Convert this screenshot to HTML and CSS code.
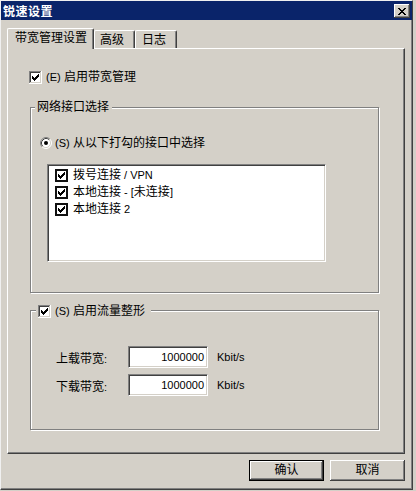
FILE: index.html
```html
<!DOCTYPE html>
<html lang="zh-CN">
<head>
<meta charset="utf-8">
<title>锐速设置</title>
<link rel="stylesheet" href="styles.css">
</head>
<body>
<svg class="defs" width="0" height="0" aria-hidden="true">
  <symbol id="cb3d" viewBox="0 0 13 13">
    <rect x="0" y="0" width="13" height="13" fill="#fff"/>
    <path d="M0 0h12v1H1v11H0z" fill="#808080"/>
    <path d="M12 0h1v13H0v-1h12z" fill="#fff"/>
    <path d="M1 1h10v1H2v9H1z" fill="#404040"/>
    <path d="M11 1h1v11H1v-1h10z" fill="#d4d0c8"/>
    <path d="M3 5h1v3H3zM4 6h1v3H4zM5 7h1v3H5zM6 6h1v3H6zM7 5h1v3H7zM8 4h1v3H8zM9 3h1v3H9z" fill="#000"/>
  </symbol>
  <symbol id="cbflat" viewBox="0 0 13 13">
    <rect x="0" y="0" width="13" height="13" fill="#111"/>
    <rect x="2" y="2" width="9" height="9" fill="#fff"/>
    <path d="M3 5h1v3H3zM4 6h1v3H4zM5 7h1v3H5zM6 6h1v3H6zM7 5h1v3H7zM8 4h1v3H8zM9 3h1v3H9z" fill="#000"/>
  </symbol>
  <symbol id="radio" viewBox="0 0 12 12">
    <circle cx="6" cy="6" r="5" fill="#fff"/>
    <path d="M2.11 9.89A5.5 5.5 0 0 1 9.89 2.11" fill="none" stroke="#808080" stroke-width="1"/>
    <path d="M9.89 2.11A5.5 5.5 0 0 1 2.11 9.89" fill="none" stroke="#fff" stroke-width="1"/>
    <path d="M2.82 9.18A4.5 4.5 0 0 1 9.18 2.82" fill="none" stroke="#404040" stroke-width="1"/>
    <path d="M9.18 2.82A4.5 4.5 0 0 1 2.82 9.18" fill="none" stroke="#d4d0c8" stroke-width="1"/>
    <circle cx="6" cy="6" r="2" fill="#000"/>
  </symbol>
</svg>

<div class="window">
  <div class="titlebar">
    <span class="title">锐速设置</span>
    <span class="close">
      <svg width="8" height="7" viewBox="0 0 8 7" shape-rendering="crispEdges"><path d="M0 0h2v1H0zM6 0h2v1H6zM1 1h2v1H1zM5 1h2v1H5zM2 2h4v1H2zM3 3h2v1H3zM2 4h4v1H2zM1 5h2v1H1zM5 5h2v1H5zM0 6h2v1H0zM6 6h2v1H6z" fill="#000"/></svg>
    </span>
  </div>

  <div class="tabs">
    <div class="tab active">带宽管理设置</div>
    <div class="tab t2">高级</div>
    <div class="tab t3">日志</div>
  </div>

  <div class="panel">
    <div class="check-row">
      <svg class="cb" viewBox="0 0 13 13"><use href="#cb3d"/></svg>
      <span><span class="l">(E)</span> 启用带宽管理</span>
    </div>

    <div class="group g1">
      <div class="legend">网络接口选择</div>
      <div class="radio-row">
        <svg class="rb" viewBox="0 0 12 12"><use href="#radio"/></svg>
        <span><span class="l">(S)</span> 从以下打勾的接口中选择</span>
      </div>
      <div class="listbox">
        <div class="item"><svg class="cb" viewBox="0 0 13 13"><use href="#cbflat"/></svg><span>拨号连接<span class="l"> / VPN</span></span></div>
        <div class="item"><svg class="cb" viewBox="0 0 13 13"><use href="#cbflat"/></svg><span>本地连接<span class="l"> - [</span>未连接<span class="l">]</span></span></div>
        <div class="item"><svg class="cb" viewBox="0 0 13 13"><use href="#cbflat"/></svg><span>本地连接<span class="l"> 2</span></span></div>
      </div>
    </div>

    <div class="group g2">
      <div class="legend legend-check">
        <svg class="cb" viewBox="0 0 13 13"><use href="#cb3d"/></svg>
        <span><span class="l">(S)</span> 启用流量整形</span>
      </div>
      <div class="field-row">
        <span class="label">上载带宽<span class="l">:</span></span>
        <span class="input l">1000000</span>
        <span class="unit l">Kbit/s</span>
      </div>
      <div class="field-row">
        <span class="label">下载带宽<span class="l">:</span></span>
        <span class="input l">1000000</span>
        <span class="unit l">Kbit/s</span>
      </div>
    </div>
  </div>

  <div class="buttons">
    <div class="btn default">确认</div>
    <div class="btn">取消</div>
  </div>
</div>
</body>
</html>
```

FILE: styles.css
```css
* {
  box-sizing: border-box;
}

html,
body {
  margin: 0;
  padding: 0;
}

body {
  width: 416px;
  height: 491px;
  overflow: hidden;
  background: #d4d0c8;
  color: #000;
  font-family: "Liberation Sans", "Noto Sans CJK SC", sans-serif;
  font-size: 12px;
}

.defs {
  position: absolute;
  width: 0;
  height: 0;
  overflow: hidden;
}

.l {
  font-size: 11px;
}

.window {
  width: 413px;
  height: 490px;
  background: #d4d0c8;
  border: 1px solid;
  border-color: #f0f0f0 #404040 #404040 #f0f0f0;
  box-shadow: inset -1px -1px 0 #808080;
}

/* title bar */
.titlebar {
  height: 19px;
  background: #0a246a;
  display: flex;
  align-items: center;
  padding-left: 2px;
}

.title {
  color: #fff;
  font-family: "Noto Sans CJK SC", sans-serif;
  font-weight: bold;
  font-size: 12px;
  letter-spacing: 0.5px;
  line-height: 19px;
}

.close {
  margin-left: auto;
  margin-right: 2px;
  width: 16px;
  height: 14px;
  background: #d4d0c8;
  box-shadow: inset -1px -1px 0 #404040, inset 1px 1px 0 #fff, inset -2px -2px 0 #808080;
  display: flex;
  align-items: center;
  justify-content: center;
  padding-top: 1px;
}

.close svg {
  display: block;
}

/* tabs */
.tabs {
  display: flex;
  align-items: flex-end;
  height: 20px;
  margin-top: 8px;
  padding-left: 6px;
  position: relative;
  z-index: 1;
}

.tab {
  height: 18px;
  background: #d4d0c8;
  border-top: 1px solid #fff;
  border-left: 1px solid #fff;
  border-right: 1px solid #404040;
  border-radius: 2px 2px 0 0;
  box-shadow: inset -1px 0 0 #808080;
  line-height: 19px;
  padding-left: 5px;
  white-space: nowrap;
}

.tab.active {
  width: 87px;
  height: 21px;
  margin-bottom: -1px;
  padding-left: 7px;
}

.tab.t2 {
  width: 41px;
}

.tab.t3 {
  width: 42px;
  padding-left: 6px;
}

/* panel */
.panel {
  width: 398px;
  height: 406px;
  margin-left: 6px;
  border: 1px solid;
  border-color: #fff #404040 #404040 #fff;
  box-shadow: inset -1px -1px 0 #808080;
  padding: 22px 0 0 21px;
}

.cb {
  display: block;
  width: 13px;
  height: 13px;
  flex-shrink: 0;
}

.rb {
  display: block;
  width: 12px;
  height: 12px;
  flex-shrink: 0;
}

.check-row {
  display: flex;
  align-items: center;
  gap: 4px;
  height: 13px;
  line-height: 13px;
  white-space: nowrap;
}

/* group boxes */
.group {
  position: relative;
  width: 349px;
  margin-left: 1px;
  border: 1px solid #808080;
  box-shadow: 1px 1px 0 #fff, inset 1px 1px 0 #fff;
}

.g1 {
  height: 186px;
  margin-top: 23px;
  padding: 29px 0 0 9px;
}

.g2 {
  height: 120px;
  margin-top: 17px;
  padding: 35px 0 0 25px;
}

.legend {
  position: absolute;
  top: -7px;
  left: 4px;
  height: 13px;
  line-height: 13px;
  padding: 0 3px 0 2px;
  background: #d4d0c8;
  white-space: nowrap;
}

.legend-check {
  display: flex;
  align-items: center;
  gap: 4px;
  top: -6px;
  left: 5px;
  padding: 0 6px 0 2px;
}

.radio-row {
  display: flex;
  align-items: center;
  gap: 3px;
  height: 12px;
  line-height: 12px;
  white-space: nowrap;
}

.listbox {
  width: 279px;
  height: 98px;
  margin-top: 15px;
  margin-left: 7px;
  background: #fff;
  border: 1px solid;
  border-color: #808080 #fff #fff #808080;
  box-shadow: inset 1px 1px 0 #404040, inset -1px -1px 0 #d4d0c8;
  padding: 2px 0 0 7px;
}

.item {
  display: flex;
  align-items: center;
  gap: 5px;
  height: 17px;
  line-height: 17px;
  white-space: nowrap;
}

/* fields */
.field-row {
  display: flex;
  align-items: center;
  height: 22px;
  white-space: nowrap;
}

.field-row + .field-row {
  margin-top: 6px;
}

.label {
  width: 72px;
  flex-shrink: 0;
}

.input {
  width: 80px;
  height: 22px;
  flex-shrink: 0;
  background: #fff;
  border: 1px solid;
  border-color: #808080 #fff #fff #808080;
  box-shadow: inset 1px 1px 0 #404040, inset -1px -1px 0 #d4d0c8;
  text-align: right;
  padding-right: 3px;
  line-height: 20px;
}

.unit {
  margin-left: 9px;
}

/* buttons */
.buttons {
  display: flex;
  justify-content: flex-end;
  gap: 6px;
  margin-top: 6px;
  padding-right: 7px;
}

.btn {
  width: 75px;
  height: 21px;
  display: flex;
  align-items: center;
  justify-content: center;
  background: #d4d0c8;
  box-shadow: inset -1px -1px 0 #404040, inset 1px 1px 0 #fff, inset -2px -2px 0 #808080;
  line-height: 19px;
}

.btn.default {
  border: 1px solid #000;
  box-shadow: inset -1px -1px 0 #404040, inset 1px 1px 0 #fff, inset -2px -2px 0 #808080;
}
```
